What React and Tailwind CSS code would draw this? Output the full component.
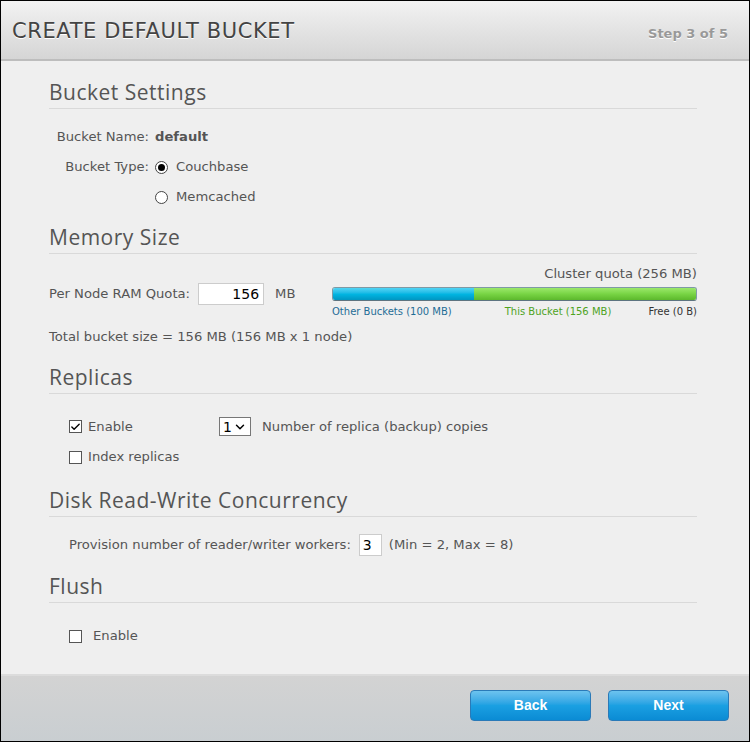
import { Check, ChevronDown } from 'lucide-react'

const body = { fontFamily: '"DejaVu Sans", Verdana, sans-serif' }
const head = { fontFamily: '"Open Sans", "Noto Sans", sans-serif' }

function Section({ title, children, className = '' }) {
  return (
    <div className={className}>
      <h2 className="text-[21px] leading-[24px] tracking-[0.5px] text-[#555]" style={head}>{title}</h2>
      <div className="mt-[4px] h-px bg-[#d9d9d9]" />
      {children}
    </div>
  )
}

function Box({ checked }) {
  return (
    <span className="flex h-[13px] w-[13px] shrink-0 items-center justify-center border border-[#555] bg-white">
      {checked && <Check size={12} strokeWidth={3} className="text-black" />}
    </span>
  )
}

function Radio({ checked }) {
  return (
    <span className="flex h-[13px] w-[13px] shrink-0 items-center justify-center rounded-full border border-[#444] bg-white">
      {checked && <span className="h-[7px] w-[7px] rounded-full bg-black" />}
    </span>
  )
}

export default function App() {
  return (
    <div className="flex h-[742px] w-[750px] flex-col border border-black bg-[#efefef] text-[13.15px] text-[#555]" style={body}>
      <div className="flex h-[60px] shrink-0 items-center justify-between border-b-2 border-[#bdbdbd] bg-gradient-to-b from-[#f2f2f2] to-[#d5d5d5] pl-[11px] pr-[21px] pt-[4px]">
        <h1 className="text-[21px] tracking-[0.6px] text-[#444] [text-shadow:0_1px_0_#fff]">CREATE DEFAULT BUCKET</h1>
        <span className="pt-[3px] text-[13px] font-bold text-[#999] [text-shadow:0_1px_0_#fff]">Step 3 of 5</span>
      </div>

      <div className="flex-1 pl-[48px] pr-[52px] pt-[19px]">
        <Section title="Bucket Settings">
          <div className="mt-[20px] grid grid-cols-[100px_1fr] gap-x-[6px] gap-y-[14px] leading-[16px]">
            <span className="text-right">Bucket Name:</span>
            <span className="font-bold">default</span>
            <span className="text-right">Bucket Type:</span>
            <label className="flex items-center gap-[8px]"><Radio checked /> Couchbase</label>
            <span />
            <label className="flex items-center gap-[8px]"><Radio /> Memcached</label>
          </div>
        </Section>

        <Section title="Memory Size" className="mt-[20px]">
          <div className="mt-[12px] flex items-start">
            <div className="flex w-[283px] items-center pt-[17px]">
              <span>Per Node RAM Quota:</span>
              <span className="ml-[8px] flex h-[22px] w-[66px] items-center justify-end border border-[#ccc] bg-white pr-[4px] text-[14px] text-black">156</span>
              <span className="ml-[11px]">MB</span>
            </div>
            <div className="flex-1">
              <div className="text-right leading-[16px]">Cluster quota (256 MB)</div>
              <div className="mt-[5px] flex h-[14px] overflow-hidden rounded-[3px] border border-[#7f9aa5] border-b-[#5d7480]">
                <div className="w-[141px] bg-gradient-to-b from-[#4fd4f5] via-[#00b6e3] to-[#0096c2]" />
                <div className="flex-1 bg-gradient-to-b from-[#9be86a] via-[#78d444] to-[#5cb82c]" />
              </div>
              <div className="mt-[4px] flex text-[10px] leading-[14px]">
                <span className="text-[#1f6d96]">Other Buckets (100 MB)</span>
                <span className="ml-[53px] text-[#4ea31e]">This Bucket (156 MB)</span>
                <span className="ml-auto text-[#333]">Free (0 B)</span>
              </div>
            </div>
          </div>
          <div className="mt-[10px] leading-[16px]">Total bucket size = 156 MB (156 MB x 1 node)</div>
        </Section>

        <Section title="Replicas" className="mt-[20px]">
          <div className="mt-[23px] pl-[20px] leading-[16px]">
            <div className="flex items-center">
              <label className="flex w-[150px] items-center gap-[6px]"><Box checked /> Enable</label>
              <span className="flex h-[19px] w-[32px] items-center justify-between border border-[#777] bg-white px-[3px] text-[14px] text-black">
                1 <ChevronDown size={14} strokeWidth={2.5} />
              </span>
              <span className="ml-[11px]">Number of replica (backup) copies</span>
            </div>
            <label className="mt-[13px] flex items-center gap-[6px]"><Box /> Index replicas</label>
          </div>
        </Section>

        <Section title="Disk Read-Write Concurrency" className="mt-[23px]">
          <div className="mt-[17px] flex items-center pl-[20px] leading-[16px]">
            <span>Provision number of reader/writer workers:</span>
            <span className="ml-[8px] flex h-[22px] w-[23px] items-center border border-[#ccc] bg-white pl-[3px] text-[14px] text-black">3</span>
            <span className="ml-[7px]">(Min = 2, Max = 8)</span>
          </div>
        </Section>

        <Section title="Flush" className="mt-[18px]">
          <label className="mt-[25px] flex items-center gap-[11px] pl-[20px] leading-[16px]"><Box /> Enable</label>
        </Section>
      </div>

      <div className="flex h-[67px] shrink-0 items-start justify-end gap-[17px] border-t-2 border-[#dcdcdc] bg-gradient-to-b from-[#d3d3d3] to-[#c9ced1] pr-[20px] pt-[14px]">
        {['Back', 'Next'].map((t) => (
          <button key={t} className="h-[31px] w-[121px] rounded-[4px] border border-[#2a7ab8] bg-gradient-to-b from-[#6cc3ef] via-[#1aa0e2] to-[#0a8bd4] text-[14px] font-bold text-white" style={{ fontFamily: '"Liberation Sans", Arial, sans-serif' }}>
            {t}
          </button>
        ))}
      </div>
    </div>
  )
}
